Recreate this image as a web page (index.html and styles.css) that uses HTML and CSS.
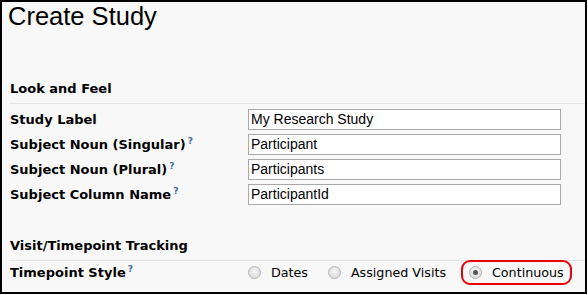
FILE: index.html
```html
<!DOCTYPE html>
<html>
<head>
    <title>Create Study</title>
    <link rel="stylesheet" href="styles.css">
</head>
<body>
    <div class="frame">
        <h1 class="title">Create Study</h1>

        <div class="section">
            <h2>Look and Feel</h2>
        </div>
        <div class="form">
            <div class="row">
                <label>Study Label</label>
                <div class="field">My Research Study</div>
            </div>
            <div class="row">
                <label>Subject Noun (Singular)<sup>?</sup></label>
                <div class="field">Participant</div>
            </div>
            <div class="row">
                <label>Subject Noun (Plural)<sup>?</sup></label>
                <div class="field">Participants</div>
            </div>
            <div class="row">
                <label>Subject Column Name<sup>?</sup></label>
                <div class="field">ParticipantId</div>
            </div>
        </div>

        <div class="section second">
            <h2>Visit/Timepoint Tracking</h2>
        </div>
        <div class="form tracking">
            <div class="row">
                <label>Timepoint Style<sup>?</sup></label>
                <div class="options">
                    <span class="opt"><span class="radio"></span>Dates</span>
                    <span class="opt"><span class="radio"></span>Assigned Visits</span>
                    <span class="opt picked"><span class="radio on"></span>Continuous</span>
                </div>
            </div>
        </div>
    </div>
</body>
</html>
```

FILE: styles.css
```css
body {
    margin: 0;
    background: #ffffff;
    font-family: "DejaVu Sans", Verdana, sans-serif;
    color: #000;
}
.frame {
    width: 583px;
    height: 290px;
    border: 2px solid #000;
    background-color: #f8f8f8;
    overflow: hidden;
}
.title {
    font-family: "Liberation Sans", Arial, sans-serif;
    font-weight: normal;
    font-size: 25.5px;
    line-height: 28px;
    margin: 0;
    padding: 0 0 0 6px;
}
.section {
    margin: 51px 0 0 7px;
    padding: 0 0 6px 1px;
    border-bottom: 1px solid #e3e3e3;
}
.section.second {
    margin-top: 31px;
}
.section h2 {
    margin: 0;
    font-size: 13px;
    font-weight: bold;
    line-height: 16px;
}
.form {
    padding: 3px 0 0 8px;
}
.form.tracking {
    padding-top: 0;
}
.row {
    display: flex;
    align-items: center;
    height: 25px;
}
.tracking .row {
    height: 23px;
}
.row label {
    width: 238px;
    font-size: 13px;
    font-weight: bold;
}
sup {
    font-size: 9px;
    color: #3d6e9e;
    margin-left: 2px;
    vertical-align: 5px;
    line-height: 0;
}
.field {
    width: 309px;
    height: 19px;
    border: 1px solid #a9a9a9;
    background: #fff;
    padding-left: 2px;
    font-family: "Liberation Sans", Arial, sans-serif;
    font-size: 14px;
    line-height: 19px;
}
.options {
    display: flex;
    align-items: center;
    font-size: 12.7px;
}
.opt {
    display: flex;
    align-items: center;
    gap: 10px;
    margin-right: 20px;
}
.radio {
    width: 11px;
    height: 11px;
    border-radius: 50%;
    border: 1px solid #b4b4b4;
    background: radial-gradient(circle at 50% 40%, #f4f4f4, #d6d6d6);
    position: relative;
}
.radio.on::after {
    content: "";
    position: absolute;
    left: 3px;
    top: 3px;
    width: 5px;
    height: 5px;
    border-radius: 50%;
    background: #555;
}
.picked {
    margin-left: -5px;
    padding: 3px 6px 3px 6px;
    border: 2px solid #e8000b;
    border-radius: 9px;
    margin-right: 0;
}
```
